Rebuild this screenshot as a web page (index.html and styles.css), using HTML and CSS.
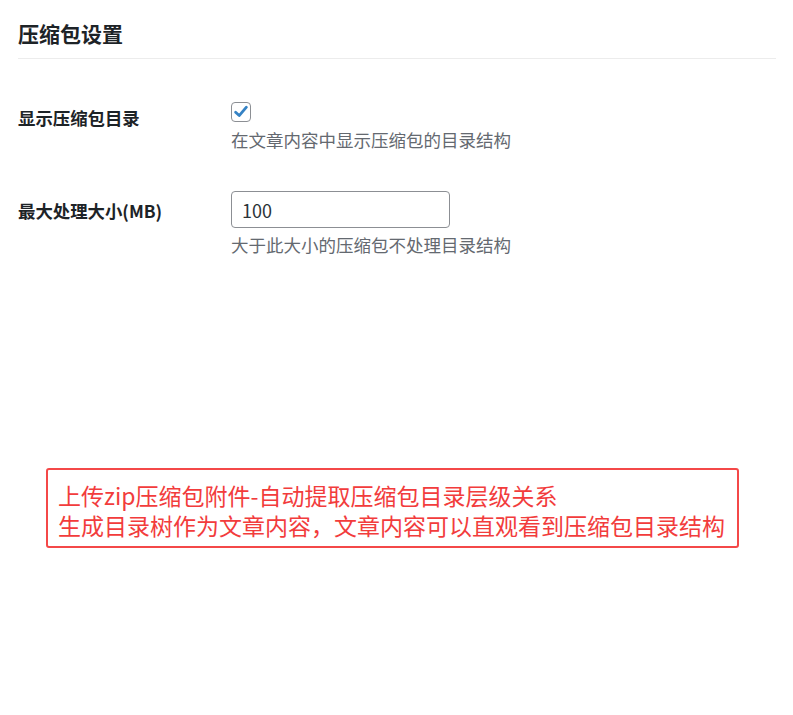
FILE: index.html
```html
<!DOCTYPE html>
<html lang="zh-CN">

<head>
    <meta charset="UTF-8">
    <meta name="viewport" content="width=device-width, initial-scale=1.0">
    <title>压缩包设置</title>
    <link rel="stylesheet" href="styles.css">
</head>

<body>
    <div class="wrap">
        <h2 class="section-title">压缩包设置</h2>

        <div class="form-table">
            <div class="form-row row-first">
                <div class="row-label">显示压缩包目录</div>
                <div class="row-field">
                    <label class="check">
                        <input type="checkbox" checked>
                        <span class="check-box">
                            <svg viewBox="0 0 20 20" width="20" height="20">
                                <path d="M4.6 10.2l3.6 3.4 7.2-8.4" fill="none" stroke="#3582c4" stroke-width="2.8" stroke-linecap="round" stroke-linejoin="round"/>
                            </svg>
                        </span>
                    </label>
                    <p class="description">在文章内容中显示压缩包的目录结构</p>
                </div>
            </div>

            <div class="form-row">
                <div class="row-label label-input">最大处理大小(MB)</div>
                <div class="row-field">
                    <input type="text" class="text-input" value="100">
                    <p class="description">大于此大小的压缩包不处理目录结构</p>
                </div>
            </div>
        </div>

        <div class="note">
            上传zip压缩包附件-自动提取压缩包目录层级关系<br>
            生成目录树作为文章内容，文章内容可以直观看到压缩包目录结构
        </div>
    </div>
</body>

</html>
```

FILE: styles.css
```css
* {
    font-family: "Noto Sans CJK SC", "Noto Sans", sans-serif;
    box-sizing: border-box;
}

body {
    margin: 0;
    background-color: #FFFFFF;
    color: #1d2327;
}

.wrap {
    padding: 0 17px 0 18px;
}

.section-title {
    font-size: 21px;
    font-weight: 600;
    line-height: 30px;
    margin: 0;
    padding: 18px 0 10px;
    border-bottom: 1px solid #ececec;
}

.form-table {
    padding-top: 43px;
}

.form-row {
    display: grid;
    grid-template-columns: 213px 1fr;
}

.form-row + .form-row {
    margin-top: 38px;
}

.row-label {
    font-size: 17.4px;
    font-weight: 700;
    line-height: 26px;
    padding-top: 3px;
}

.row-label.label-input {
    padding-top: 7px;
}

.check {
    display: block;
    width: 20px;
    height: 20px;
}

.check > input {
    display: none;
}

.check-box {
    display: block;
    width: 20px;
    height: 20px;
    border: 1px solid #8c8f94;
    border-radius: 4px;
}

.check-box > svg {
    display: block;
    margin: -1px;
}

.description {
    margin: 5px 0 0;
    font-size: 17.5px;
    line-height: 26px;
    color: #646970;
}

.text-input {
    display: block;
    width: 219px;
    height: 37px;
    padding: 0 10px;
    font-size: 18px;
    color: #2c3338;
    border: 1px solid #8c8f94;
    border-radius: 4px;
    outline: none;
}

.text-input + .description {
    margin-top: 4px;
}

.note {
    margin: 210px 0 0 28px;
    width: 693px;
    padding: 10px 10px 6px;
    border: 2px solid #f44848;
    border-radius: 3px;
    color: #f23c3c;
    font-size: 23px;
    line-height: 30px;
    white-space: nowrap;
}
```
